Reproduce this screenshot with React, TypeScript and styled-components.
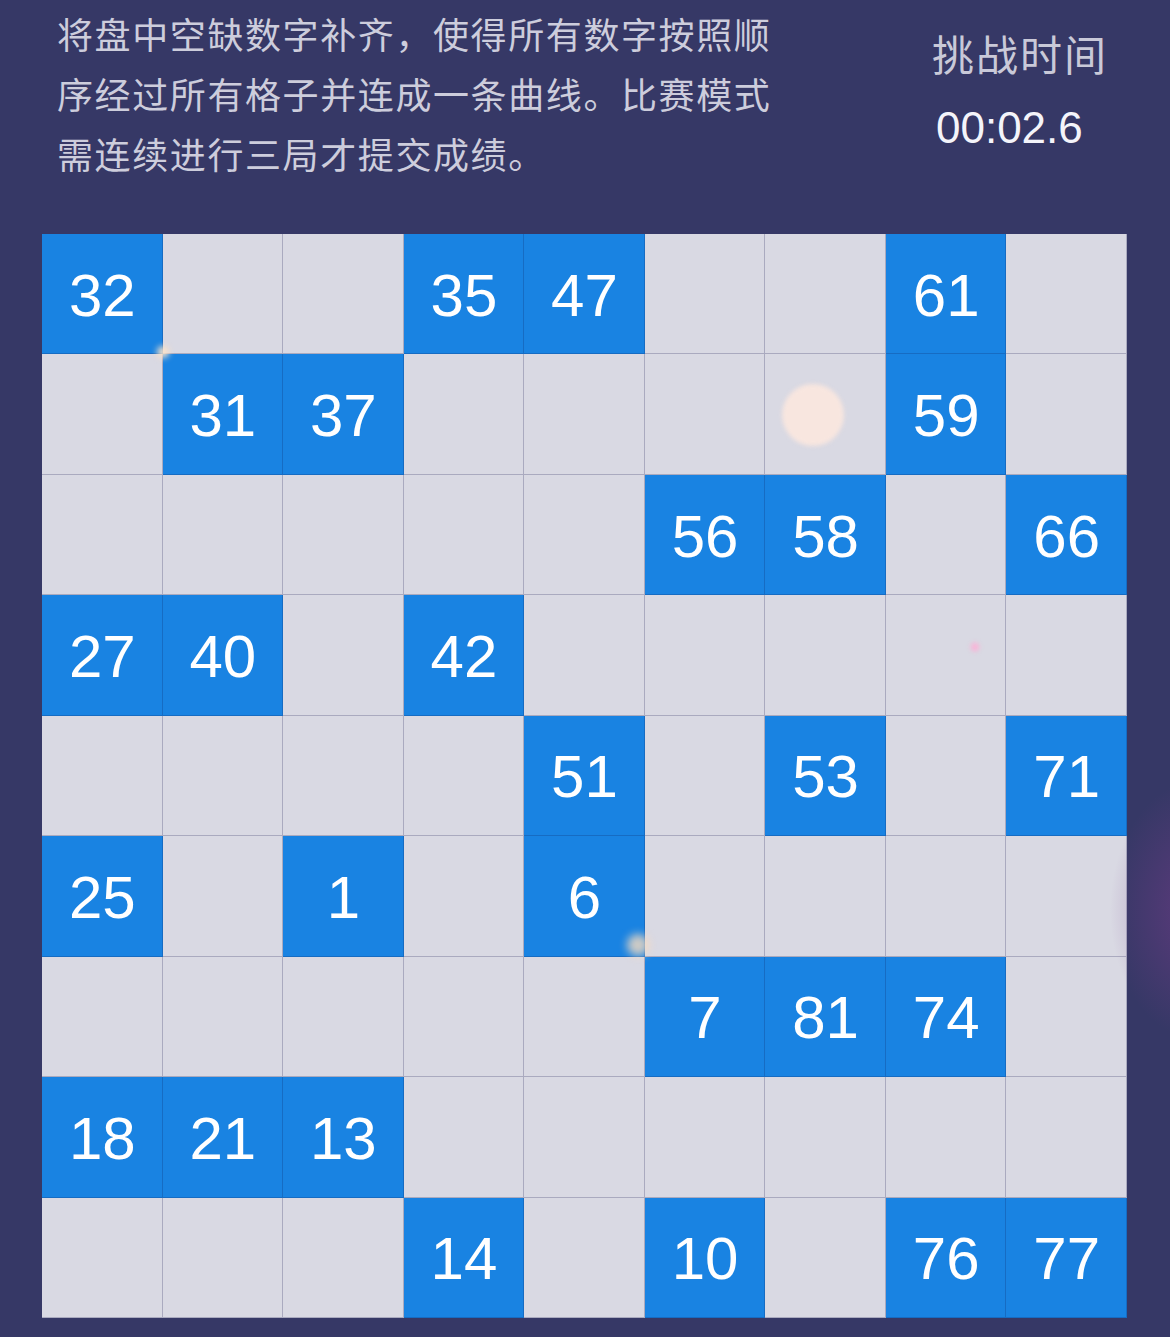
import React from "react";
import styled, { createGlobalStyle } from "styled-components";

const GlobalStyle = createGlobalStyle`
  html, body {
    margin: 0;
    padding: 0;
    background: #363866;
  }
  body {
    font-family: "Liberation Sans", "Noto Sans CJK SC", sans-serif;
  }
`;

const Page = styled.div`
  width: 1170px;
  height: 1337px;
  background: #363866;
  position: relative;
  overflow: hidden;
`;

const Header = styled.div`
  display: flex;
  justify-content: space-between;
  align-items: flex-start;
  padding: 3px 62px 0 57px;
  height: 234px;
  box-sizing: border-box;
`;

const Intro = styled.p`
  margin: 0;
  width: 730px;
  font-family: "Noto Sans CJK SC", sans-serif;
  font-size: 36px;
  letter-spacing: 1.6px;
  line-height: 60px;
  color: #cdcddc;
`;

const Timer = styled.div`
  display: flex;
  flex-direction: column;
  padding-top: 22px;
`;

const TimerLabel = styled.div`
  font-family: "Noto Sans CJK SC", sans-serif;
  font-size: 42px;
  letter-spacing: 2px;
  line-height: 56px;
  color: #c9c9d8;
`;

const TimerValue = styled.div`
  font-family: "Liberation Sans", sans-serif;
  font-size: 44px;
  line-height: 56px;
  margin-top: 19px;
  padding-left: 4px;
  color: #f4f4fa;
`;

const Board = styled.div`
  position: relative;
  margin-left: 42px;
  width: 1085px;
  height: 1084px;
  display: grid;
  grid-template-columns: repeat(9, 1fr);
  grid-template-rows: repeat(9, 1fr);
`;

const Cell = styled.div<{ $filled: boolean }>`
  display: flex;
  align-items: center;
  justify-content: center;
  background: ${({ $filled }) => ($filled ? "#1983e2" : "#d9d9e3")};
  box-shadow: ${({ $filled }) =>
    $filled
      ? "inset -1px -1px 0 rgba(20, 90, 170, 0.55)"
      : "inset -1px -1px 0 rgba(150, 150, 175, 0.7)"};
  color: #ffffff;
  font-family: "Liberation Sans", sans-serif;
  font-size: 60px;
  padding-top: 2px;
  box-sizing: border-box;
`;

const Glow = styled.div<{ $size: number; $color: string; $blur: number }>`
  position: absolute;
  width: ${({ $size }) => $size}px;
  height: ${({ $size }) => $size}px;
  border-radius: 50%;
  background: ${({ $color }) => $color};
  filter: blur(${({ $blur }) => $blur}px);
  transform: translate(-50%, -50%);
  pointer-events: none;
`;

const SideHaze = styled.div`
  position: absolute;
  right: -120px;
  top: 780px;
  width: 180px;
  height: 260px;
  border-radius: 50%;
  background: radial-gradient(closest-side, rgba(120, 60, 140, 0.6), rgba(54, 56, 102, 0));
  pointer-events: none;
`;

const rows: (number | null)[][] = [
  [32, null, null, 35, 47, null, null, 61, null],
  [null, 31, 37, null, null, null, null, 59, null],
  [null, null, null, null, null, 56, 58, null, 66],
  [27, 40, null, 42, null, null, null, null, null],
  [null, null, null, null, 51, null, 53, null, 71],
  [25, null, 1, null, 6, null, null, null, null],
  [null, null, null, null, null, 7, 81, 74, null],
  [18, 21, 13, null, null, null, null, null, null],
  [null, null, null, 14, null, 10, null, 76, 77],
];

const glows = [
  { x: 771, y: 181, size: 62, color: "#f8e6df", blur: 2 },
  { x: 121, y: 118, size: 12, color: "#fbe3c8", blur: 3 },
  { x: 596, y: 711, size: 22, color: "rgba(250, 220, 190, 0.8)", blur: 4 },
  { x: 933, y: 413, size: 9, color: "#f7b6d8", blur: 2 },
];

export default function App() {
  return (
    <Page>
      <GlobalStyle />
      <Header>
        <Intro>
          将盘中空缺数字补齐，使得所有数字按照顺序经过所有格子并连成一条曲线。比赛模式需连续进行三局才提交成绩。
        </Intro>
        <Timer>
          <TimerLabel>挑战时间</TimerLabel>
          <TimerValue>00:02.6</TimerValue>
        </Timer>
      </Header>
      <Board>
        {rows.flatMap((row, r) =>
          row.map((n, c) => (
            <Cell key={`${r}-${c}`} $filled={n !== null}>
              {n}
            </Cell>
          ))
        )}
        {glows.map((g, i) => (
          <Glow
            key={i}
            $size={g.size}
            $color={g.color}
            $blur={g.blur}
            style={{ left: g.x, top: g.y }}
          />
        ))}
      </Board>
      <SideHaze />
    </Page>
  );
}
